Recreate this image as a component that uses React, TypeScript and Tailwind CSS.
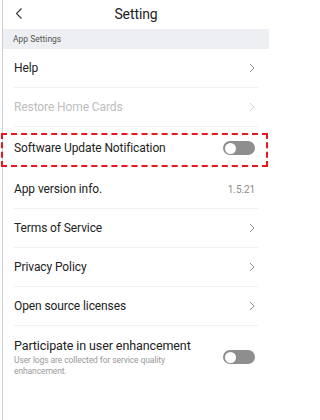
import React from 'react';

const font = { fontFamily: 'Roboto, "Noto Sans", sans-serif' };

function Chevron({ light }: { light?: boolean }) {
  return (
    <svg width="6" height="10" viewBox="0 0 6 10" fill="none">
      <path d="M1 1l4 4-4 4" stroke={light ? '#d4d4d4' : '#8c8c8c'} strokeWidth="1" />
    </svg>
  );
}

function Toggle() {
  return (
    <div className="flex h-[14px] w-[32px] items-center rounded-full bg-[#8e8e8e] px-[2px]">
      <div className="h-[11px] w-[11px] rounded-full bg-white" />
    </div>
  );
}

function Row({ children, last }: { children: React.ReactNode; last?: boolean }) {
  return (
    <div className="mx-[11px]">
      <div className="flex h-[38px] items-center justify-between pr-[3px]">{children}</div>
      {!last && <div className="h-px bg-[#f1f1f1]" />}
    </div>
  );
}

export default function App() {
  return (
    <div className="h-[420px] w-[269px] overflow-hidden bg-white pl-[2px]" style={font}>
      <div className="h-full border-l border-[#cfcfcf]">
        {/* header */}
        <div className="relative flex h-[29px] items-center justify-center">
          <svg className="absolute left-[12px] top-[8px]" width="8" height="11" viewBox="0 0 8 11" fill="none">
            <path d="M6.5 0.5L1.5 5.5l5 5" stroke="#333" strokeWidth="1.1" />
          </svg>
          <span className="text-[14px] tracking-[-0.1px] text-[#222]">Setting</span>
        </div>

        {/* section */}
        <div className="flex h-[20px] items-center bg-[#eeeff2] pl-[10px]">
          <span className="text-[8.5px] text-[#555]">App Settings</span>
        </div>

        <div className="text-[12px] tracking-[-0.1px] text-[#222]">
          <Row>
            <span>Help</span>
            <Chevron />
          </Row>
          <Row>
            <span className="text-[#bdbdbd]">Restore Home Cards</span>
            <Chevron light />
          </Row>
          <div className="relative">
            <Row>
              <span className="pt-[4px]">Software Update Notification</span>
              <div className="pt-[4px]">
                <Toggle />
              </div>
            </Row>
            <div className="absolute bottom-[-1px] left-[-2px] right-[1px] top-[6px] border-2 border-dashed border-[#e8171f]" />
          </div>
          <div className="h-[4px]" />
          <Row>
            <span>App version info.</span>
            <span className="text-[10px] text-[#8a8a8a]">1.5.21</span>
          </Row>
          <Row>
            <span>Terms of Service</span>
            <Chevron />
          </Row>
          <Row>
            <span>Privacy Policy</span>
            <Chevron />
          </Row>
          <Row>
            <span>Open source licenses</span>
            <Chevron />
          </Row>
          <div className="mx-[11px] flex items-start justify-between pr-[3px] pt-[11px]">
            <div className="flex flex-col">
              <span className="text-[12.5px] leading-[18px]">Participate in user enhancement</span>
              <span className="w-[165px] text-[8.5px] leading-[11px] text-[#9a9a9a]">
                User logs are collected for service quality enhancement.
              </span>
            </div>
            <div className="pt-[13px]">
              <Toggle />
            </div>
          </div>
        </div>
      </div>
    </div>
  );
}
